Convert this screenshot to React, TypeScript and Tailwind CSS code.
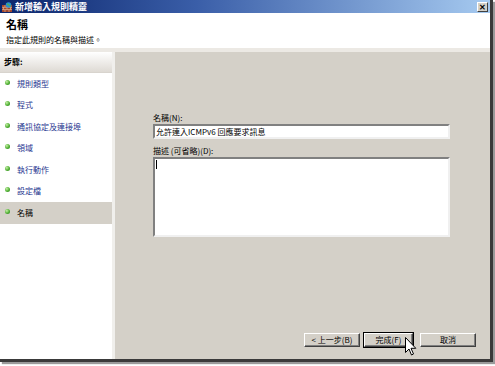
import React from "react";

const steps = ["規則類型", "程式", "通訊協定及連接埠", "領域", "執行動作", "設定檔", "名稱"];

const font = { fontFamily: '"Noto Sans CJK TC", "Liberation Sans", sans-serif' };

function Bullet() {
  return (
    <span className="mr-[6px] mt-[-3px] inline-block h-[5px] w-[5px] shrink-0 rounded-full bg-[radial-gradient(circle_at_35%_35%,#c8f0a8,#4fb033_55%,#2d7a1c)]" />
  );
}

function WinButton({ label, main }: { label: string; main?: boolean }) {
  return (
    <div className={main ? "border border-[#000]" : "border border-transparent"}>
      <div className="flex h-[14px] items-center justify-center border border-t-white border-l-white border-r-[#404040] border-b-[#404040] bg-[#d4d0c8] text-[8px] leading-none text-black shadow-[inset_-1px_-1px_0_#808080]"
        style={{ width: main ? 49 : 56 }}>
        {label}
      </div>
    </div>
  );
}

function TitleIcon() {
  return (
    <svg width="10" height="10" viewBox="0 0 10 10">
      <rect x="0" y="3" width="10" height="7" fill="#a0442c" />
      <path d="M0 5.3h10M0 7.6h10M3 3v2.3M7 3v2.3M1.5 5.3v2.3M5 5.3v2.3M8.5 5.3v2.3M3 7.6V10M7 7.6V10" stroke="#e8c8a0" strokeWidth="0.6" />
      <circle cx="6.5" cy="3" r="2.8" fill="#2a8fd0" />
      <path d="M5 1.8c1 .2 1 1.2 2 1.2s.8 1.2 1.6 1" stroke="#4cb848" strokeWidth="1.2" fill="none" />
    </svg>
  );
}

function Cursor() {
  return (
    <svg className="absolute left-[405px] top-[337px]" width="12" height="20" viewBox="0 0 12 20">
      <path d="M0.5 0.5 L0.5 15.5 L4 12 L6.5 18 L8.5 17 L6 11.3 L10.8 11.3 Z" fill="#fff" stroke="#000" strokeWidth="1" strokeLinejoin="miter" />
    </svg>
  );
}

export default function App() {
  return (
    <div className="relative h-[366px] w-[495px] overflow-hidden bg-white" style={font}>
      <div className="flex h-[362px] w-[493px] flex-col border-r-[3px] border-b-[3px] border-r-[#3a3a3a] border-b-[#3a3a3a] shadow-[2px_2px_1px_#9a9a9a]">
        {/* title bar */}
        <div className="flex h-[13px] shrink-0 items-center bg-[linear-gradient(to_right,#0a246a,#3a5ea8_40%,#a6caf0)] pl-[2px] pr-[2px]">
          <TitleIcon />
          <span className="ml-[3px] text-[9px] font-bold leading-none text-white">新增輸入規則精靈</span>
          <div className="ml-auto flex h-[10px] w-[11px] items-center justify-center border border-t-white border-l-white border-r-[#404040] border-b-[#404040] bg-[#d4d0c8] text-[8px] font-bold leading-none text-black">
            ✕
          </div>
        </div>

        {/* header */}
        <div className="flex h-[35px] shrink-0 flex-col justify-center bg-white pl-[6px]">
          <div className="text-[11px] font-bold leading-[14px] text-black">名稱</div>
          <div className="mt-[4px] text-[8px] leading-[10px] text-black">指定此規則的名稱與描述。</div>
        </div>
        <div className="h-[4px] shrink-0 bg-[#ece9e4]" />

        {/* body */}
        <div className="flex min-h-0 flex-1">
          <div className="flex w-[115px] shrink-0 flex-col border-r-[3px] border-r-[#f0efec] bg-white">
            <div className="flex h-[21px] items-center border-b border-b-[#d8d4ce] bg-[linear-gradient(to_bottom,#ffffff,#dedad4)] pl-[4px] text-[8px] font-bold text-black">
              步驟:
            </div>
            {steps.map((s, i) => (
              <div
                key={s}
                className={
                  "flex h-[21.5px] items-center pl-[5px] text-[8px] leading-none " +
                  (i === steps.length - 1 ? "bg-[#d4d0c8] text-black" : "text-[#1f3690]")
                }
              >
                <Bullet />
                <span className="pl-[1px]">{s}</span>
              </div>
            ))}
          </div>

          <div className="flex flex-1 flex-col bg-[#d4d0c8] pl-[38px] pr-[38px]">
            <div className="mt-[61px] text-[8px] leading-[10px] text-black">名稱(N):</div>
            <div className="mt-[1px] flex h-[15px] w-[297px] items-center border-2 border-t-[#808080] border-l-[#808080] border-r-[#f0f0f0] border-b-[#f0f0f0] bg-white pl-[1px] text-[8px] leading-none text-black">
              允許連入ICMPv6 回應要求訊息
            </div>
            <div className="mt-[7px] text-[8px] leading-[10px] text-black">描述 (可省略)(D):</div>
            <div className="mt-[1px] h-[80px] w-[297px] border-2 border-t-[#808080] border-l-[#808080] border-r-[#f0f0f0] border-b-[#f0f0f0] bg-white pl-[1px] pt-[1px]">
              <div className="h-[9px] w-px bg-black" />
            </div>
            <div className="mt-auto mb-[11px] mr-[-25px] flex justify-end gap-[2px]">
              <WinButton label="< 上一步(B)" />
              <WinButton label="完成(F)" main />
              <div className="w-px" />
              <WinButton label="取消" />
            </div>
          </div>
        </div>
      </div>
      <Cursor />
    </div>
  );
}
